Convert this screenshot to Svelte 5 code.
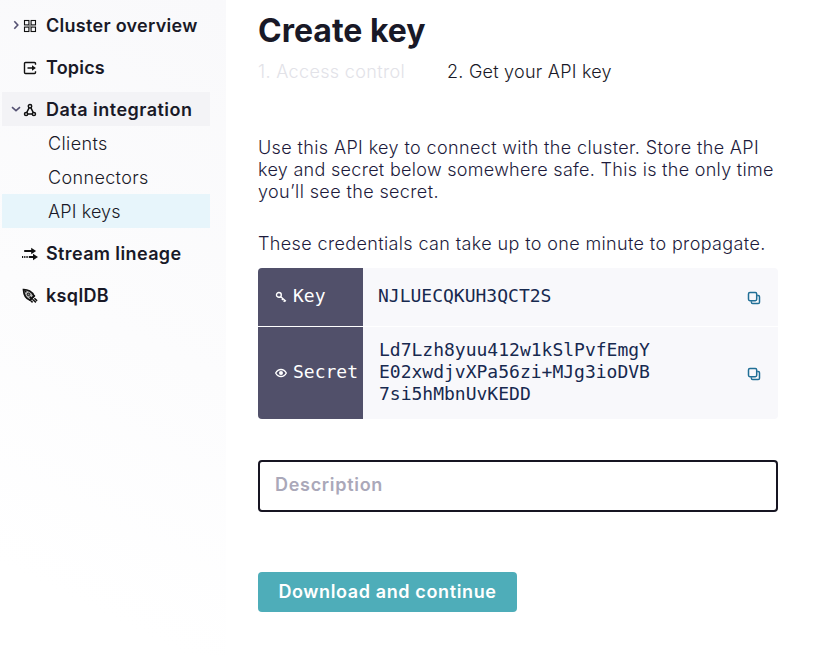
<script>
  const clients = [
    { label: 'Clients', tracking: 0.38 },
    { label: 'Connectors', tracking: 0.36 },
    { label: 'API keys', tracking: 0.12 }
  ];
  const items = [
    { id: 'cluster', label: 'Cluster overview', arrow: 'right', tracking: 0.28 },
    { id: 'topics', label: 'Topics', tracking: 0.2 },
    { id: 'data', label: 'Data integration', arrow: 'down', children: clients, tracking: 0.48 },
    { id: 'stream', label: 'Stream lineage', tracking: 0.38 },
    { id: 'ksql', label: 'ksqlDB', tracking: 0.34 }
  ];
  const introLines = [
    { text: 'Use this API key to connect with the cluster. Store the API', tracking: 0.375 },
    { text: 'key and secret below somewhere safe. This is the only time', tracking: 0.295 },
    { text: 'you’ll see the secret.', tracking: 0.38 }
  ];
  const secretLines = ['Ld7Lzh8yuu412w1kSlPvfEmgY', 'E02xwdjvXPa56zi+MJg3ioDVB', '7si5hMbnUvKEDD'];
</script>

{#snippet copyIcon()}
  <svg class="copy" viewBox="0 0 14 14" width="14" height="14" fill="none" stroke="#216f96" stroke-width="1.5">
    <rect x="1.5" y="1.5" width="8.2" height="8.2" rx="1.4" />
    <path d="M10.2 4.4h1a1.3 1.3 0 0 1 1.3 1.3v5.5a1.3 1.3 0 0 1-1.3 1.3H5.7a1.3 1.3 0 0 1-1.3-1.3v-1" />
  </svg>
{/snippet}

<div class="page">
  <nav>
    {#each items as item}
      <div class="item" class:open={item.children}>
        <span class="arrow">
          {#if item.arrow === 'right'}
            <svg width="10" height="10" viewBox="0 0 10 10"><path d="M3.3 1.2 6.8 5 3.3 8.8" /></svg>
          {:else if item.arrow === 'down'}
            <svg width="10" height="10" viewBox="0 0 10 10"><path d="M1 3.2 5 6.7 9 3.2" /></svg>
          {/if}
        </span>
        <svg class="icon" width="16" height="16" viewBox="0 0 16 16">
          {#if item.id === 'cluster'}
            <g fill="none" stroke="#111" stroke-width="1.1">
              <rect x="2.5" y="2.5" width="4.4" height="4.4" /><rect x="9.1" y="2.5" width="4.4" height="4.4" />
              <rect x="2.5" y="9.1" width="4.4" height="4.4" /><rect x="9.1" y="9.1" width="4.4" height="4.4" />
            </g>
            <path d="M8 5v6M5 8h6" stroke="#777" stroke-width="1" />
          {:else if item.id === 'topics'}
            <path d="M13.5 4.7V3.5a1 1 0 0 0-1-1h-9a1 1 0 0 0-1 1v9a1 1 0 0 0 1 1h9a1 1 0 0 0 1-1v-1.2" fill="none" stroke="#111" stroke-width="1.4" />
            <path d="M5.5 8h6" stroke="#111" stroke-width="1.5" /><path d="m10 5.3 3.9 2.7-3.9 2.7z" fill="#111" />
          {:else if item.id === 'data'}
            <g fill="none" stroke="#111" stroke-width="1.5">
              <circle cx="8" cy="4.2" r="1.7" /><circle cx="4.1" cy="12" r="1.6" /><circle cx="11.9" cy="12" r="1.6" />
              <path d="M7.2 5.7 4.8 10.3M8.8 5.7l2.4 4.6M5.8 12.1h4.4" />
            </g>
          {:else if item.id === 'stream'}
            <path d="M2.2 5h9" stroke="#111" stroke-width="2" /><path d="m9.2 1.8 4.9 3.2-4.9 3.2z" fill="#111" />
            <path d="M0 11h1.2M2.2 11h1.2M4.4 11h1.3M6.8 11h6" stroke="#111" stroke-width="2" /><path d="m11 7.8 5 3.2-5 3.2z" fill="#111" />
          {:else}
            <path d="M1.5 1.6c4-.1 8.8 2 10.4 6.4L8 12.1C4 10.7 1.8 6.8 1.5 1.6Z" fill="#bbb" stroke="#111" stroke-width="1.7" />
            <circle cx="6.5" cy="6.4" r="1.3" fill="#888" stroke="#111" />
            <path d="m7.7 12.5 5.2-5.1M10.4 11.3l3.5 3.1M12.4 10.2l2.7 2.7M8.8 12.7l1.8 1.7M4.3 4.3 3 3M7.6 8.6l1.7 1.7" fill="none" stroke="#111" stroke-width="1.5" />
          {/if}
        </svg>
        <span style:letter-spacing="{item.tracking}px">{item.label}</span>
      </div>
      {#if item.children}
        {#each item.children as child}
          <div class="child" class:selected={child.label === 'API keys'} style:letter-spacing="{child.tracking}px">{child.label}</div>
        {/each}
      {/if}
    {/each}
  </nav>

  <main>
    <h1>Create key</h1>
    <div class="steps">
      <span class="done">1. Access control</span>
      <span class="current">2. Get your API key</span>
    </div>
    <p class="intro">
      {#each introLines as line}<span style:letter-spacing="{line.tracking}px">{line.text}</span>{/each}
    </p>
    <p class="note">These credentials can take up to one minute to propagate.</p>

    <div class="credentials">
      <div class="row key">
        <div class="label">
          <svg width="12" height="12" viewBox="0 0 12 12" fill="none" stroke="#fff" stroke-width="1.4">
            <circle cx="3.9" cy="3.9" r="2.4" /><path d="m5.7 5.7 5.2 4.6M8.1 7.6 6.9 9M9.9 9.2l-1.2 1.5" />
          </svg>
          <span>Key</span>
        </div>
        <div class="value">NJLUECQKUH3QCT2S</div>
        {@render copyIcon()}
      </div>
      <div class="row secret">
        <div class="label">
          <svg width="12" height="12" viewBox="0 0 12 12" fill="none" stroke="#fff" stroke-width="1.4">
            <path d="M.7 6C3.2 1.3 8.8 1.3 11.3 6 8.8 10.7 3.2 10.7.7 6Z" /><circle cx="6" cy="6" r="2" fill="#fff" stroke="none" />
          </svg>
          <span>Secret</span>
        </div>
        <div class="value">
          {#each secretLines as line}<div>{line}</div>{/each}
        </div>
        {@render copyIcon()}
      </div>
    </div>

    <input placeholder="Description" />
    <button>Download and continue</button>
  </main>
</div>

<style>
  :global(body) { background: #fff; }
  .page {
    display: flex;
    height: 656px;
    overflow: hidden;
    font-family: Inter, sans-serif;
    font-size: 18px;
    color: #191927;
  }
  nav {
    box-sizing: border-box;
    width: 226px;
    padding: 8px 16px 0 2px;
    background: linear-gradient(206deg, #f9f9fb 0%, #fcfcfd 50%, #fff 88%);
  }
  .item {
    display: flex;
    align-items: center;
    height: 34px;
    margin-bottom: 8px;
    font-weight: 600;
    white-space: nowrap;
  }
  .item.open { background: #f3f3f6; margin-bottom: 0; }
  .arrow { display: flex; width: 10px; margin: 0 1px 0 9px; }
  .arrow path { fill: none; stroke: #555273; stroke-width: 1.6; }
  .icon { margin-right: 8px; margin-top: 1px; }
  .child {
    height: 34px;
    padding-left: 46px;
    line-height: 35px;
    font-weight: 300;
  }
  .child.selected { background: #e7f5fb; margin-bottom: 8px; }
  main { width: 520px; padding-left: 32px; }
  h1 {
    margin: 11px 0 0;
    font-size: 32px;
    line-height: 40px;
    font-weight: 700;
  }
  .steps {
    display: flex;
    gap: 42px;
    margin-top: 10px;
    line-height: 22px;
    font-weight: 300;
    white-space: nowrap;
  }
  .done { color: #e2e2e8; letter-spacing: 0.34px; }
  .current { letter-spacing: 0.24px; }
  p {
    margin: 0;
    line-height: 22px;
    font-weight: 300;
    letter-spacing: 0.37px;
    white-space: nowrap;
    color: #1d1b3c;
  }
  .intro { margin-top: 54px; }
  .intro span { display: block; }
  .note { margin-top: 30px; }
  .credentials {
    display: flex;
    flex-direction: column;
    gap: 1px;
    margin-top: 13px;
    border-radius: 4px;
    overflow: hidden;
    font-family: "DejaVu Sans Mono", monospace;
    line-height: 22px;
  }
  .row {
    display: flex;
    align-items: center;
    background: #f8f8fb;
    color: #17294f;
  }
  .key { height: 58px; }
  .secret { height: 92px; }
  .label {
    box-sizing: border-box;
    display: flex;
    align-items: center;
    gap: 6px;
    width: 105px;
    height: 100%;
    padding: 0 0 2px 17px;
    background: #51506a;
    color: #fff;
  }
  .label svg { margin-top: 2px; }
  .value { flex: 1; padding: 0 0 2px 15px; }
  .secret .value { padding-left: 16px; }
  .copy { margin: 2px 17px 0 0; }
  input {
    display: block;
    box-sizing: border-box;
    width: 520px;
    height: 52px;
    margin: 41px 0 0;
    padding: 0 15px 4px;
    border: 2px solid #171522;
    border-radius: 4px;
    background: #fff;
    font: 600 18px Inter, sans-serif;
    letter-spacing: 0.7px;
    outline: 0;
  }
  input::placeholder { color: #aaa8b9; opacity: 1; }
  button {
    display: block;
    width: 259px;
    height: 40px;
    margin-top: 60px;
    padding: 0 0 2px;
    border: 0;
    border-radius: 4px;
    background: #4eadb9;
    color: #fff;
    font: 600 18px Inter, sans-serif;
    letter-spacing: 0.62px;
    white-space: nowrap;
  }
</style>
